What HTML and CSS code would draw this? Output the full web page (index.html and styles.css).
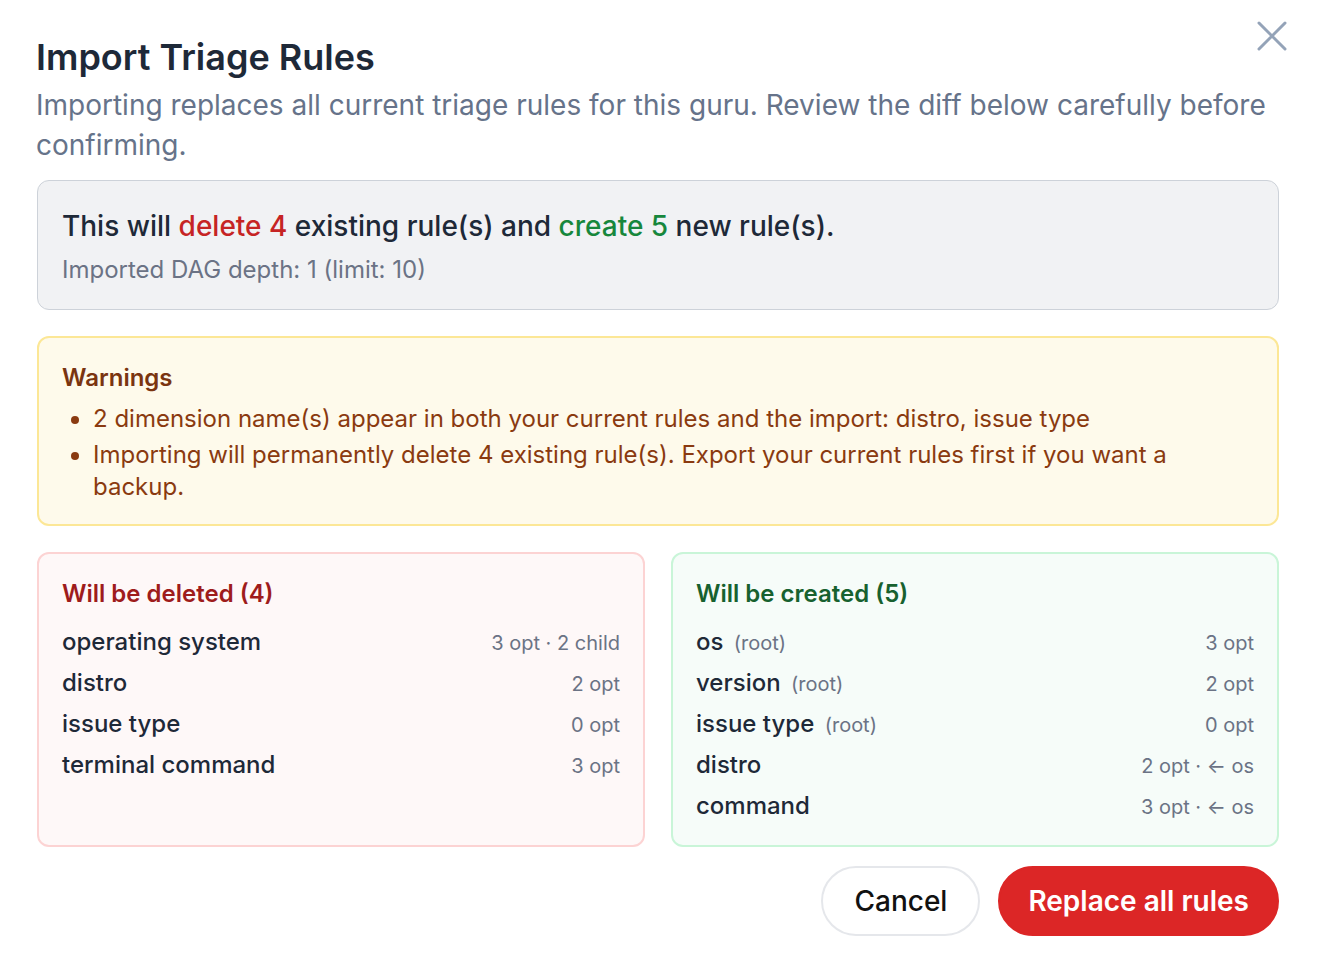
FILE: index.html
```html
<!DOCTYPE html>
<html lang="en">
<head>
<meta charset="utf-8">
<title>Import Triage Rules</title>
<link rel="stylesheet" href="styles.css">
</head>
<body>
<div class="dialog">
  <button class="close" aria-label="Close">
    <svg width="32" height="32" viewBox="0 0 32 32"><path d="M3 3 L29 29 M29 3 L3 29" stroke="#94a3b8" stroke-width="3" stroke-linecap="round" fill="none"/></svg>
  </button>
  <h1 class="title">Import Triage Rules</h1>
  <p class="subtitle">Importing replaces all current triage rules for this guru. Review the diff below carefully before confirming.</p>

  <div class="summary">
    <p class="summary-main">This will <span class="red">delete 4</span> existing rule(s) and <span class="green">create 5</span> new rule(s).</p>
    <p class="summary-sub">Imported DAG depth: 1 (limit: 10)</p>
  </div>

  <div class="warnings">
    <p class="warn-title">Warnings</p>
    <ul class="warn-list">
      <li>2 dimension name(s) appear in both your current rules and the import: distro, issue type</li>
      <li>Importing will permanently delete 4 existing rule(s). Export your current rules first if you want a backup.</li>
    </ul>
  </div>

  <div class="diff">
    <div class="panel panel-del">
      <p class="panel-title">Will be deleted (4)</p>
      <ul class="rows">
        <li class="row"><span class="name">operating system</span><span class="meta">3 opt · 2 child</span></li>
        <li class="row"><span class="name">distro</span><span class="meta">2 opt</span></li>
        <li class="row"><span class="name">issue type</span><span class="meta">0 opt</span></li>
        <li class="row"><span class="name">terminal command</span><span class="meta">3 opt</span></li>
      </ul>
    </div>
    <div class="panel panel-add">
      <p class="panel-title">Will be created (5)</p>
      <ul class="rows">
        <li class="row"><span class="name">os <span class="tag">(root)</span></span><span class="meta">3 opt</span></li>
        <li class="row"><span class="name">version <span class="tag">(root)</span></span><span class="meta">2 opt</span></li>
        <li class="row"><span class="name">issue type <span class="tag">(root)</span></span><span class="meta">0 opt</span></li>
        <li class="row"><span class="name">distro</span><span class="meta">2 opt · ← os</span></li>
        <li class="row"><span class="name">command</span><span class="meta">3 opt · ← os</span></li>
      </ul>
    </div>
  </div>

  <div class="actions">
    <button class="btn btn-cancel">Cancel</button>
    <button class="btn btn-danger">Replace all rules</button>
  </div>
</div>
</body>
</html>
```

FILE: styles.css
```css
* { box-sizing: border-box; }
html, body { margin: 0; padding: 0; background: #ffffff; }
body {
  font-family: Inter, "Noto Sans", "Liberation Sans", sans-serif;
  color: #1f2937;
}
p, h1, ul { margin: 0; padding: 0; }
ul { list-style: none; }

.dialog {
  position: relative;
  padding: 29px 39px 0 37px;
}

.close {
  position: absolute;
  top: 20px;
  right: 30px;
  width: 32px;
  height: 32px;
  padding: 0;
  border: none;
  background: none;
  display: flex;
  align-items: center;
  justify-content: center;
}

.title {
  font-size: 36px;
  line-height: 56px;
  font-weight: 600;
  color: #1e2938;
  margin-left: -1px;
}

.subtitle {
  font-size: 28px;
  line-height: 40px;
  color: #66738a;
  margin-left: -1px;
}

.summary {
  margin-top: 15px;
  background: #f1f2f4;
  border: 1px solid #cdd2d9;
  border-radius: 12px;
  padding: 25px 24px 23px 24px;
}
.summary-main {
  font-size: 28px;
  line-height: 40px;
  font-weight: 500;
  color: #1e2938;
}
.red { color: #c62424; }
.green { color: #17873c; }
.summary-sub {
  margin-top: 8px;
  font-size: 24px;
  line-height: 32px;
  color: #6b7385;
}

.warnings {
  margin-top: 26px;
  background: #fefaeb;
  border: 2px solid #fce796;
  border-radius: 12px;
  padding: 24px 22px 21px 23px;
  color: #8a3a10;
}
.warn-title {
  font-size: 24px;
  line-height: 32px;
  font-weight: 600;
  color: #7a3410;
}
.warn-list {
  margin-top: 9px;
  padding-left: 31px;
  list-style: disc;
  display: flex;
  flex-direction: column;
  gap: 4px;
}
.warn-list li {
  font-size: 24px;
  line-height: 32px;
}

.diff {
  margin-top: 26px;
  display: grid;
  grid-template-columns: 1fr 1fr;
  gap: 26px;
}
.panel {
  border-radius: 12px;
  padding: 24px 23px 23px 23px;
  border: 2px solid;
}
.panel-del { background: #fef8f8; border-color: #fcd3d3; }
.panel-add { background: #f6fcf9; border-color: #c9f5d8; }
.panel-title {
  font-size: 24px;
  line-height: 32px;
  font-weight: 600;
}
.panel-del .panel-title { color: #9e1c1c; }
.panel-add .panel-title { color: #17612f; }

.rows {
  margin-top: 16px;
  display: flex;
  flex-direction: column;
  gap: 9px;
}
.row {
  display: flex;
  justify-content: space-between;
  align-items: center;
  height: 32px;
}
.name {
  font-size: 24px;
  line-height: 32px;
  font-weight: 500;
  color: #1e2938;
}
.tag {
  font-size: 20px;
  font-weight: 400;
  color: #6b7385;
  margin-left: 4px;
}
.meta {
  font-size: 20px;
  line-height: 32px;
  color: #6b7385;
  padding-top: 2px;
}

.actions {
  margin-top: 19px;
  display: flex;
  justify-content: flex-end;
  gap: 18px;
}
.btn {
  font-family: inherit;
  font-size: 28px;
  line-height: 40px;
  font-weight: 500;
  height: 70px;
  border-radius: 35px;
  padding: 0 31px;
  cursor: pointer;
}
.btn-cancel {
  background: #ffffff;
  border: 2px solid #e5e7eb;
  color: #111111;
}
.btn-danger {
  background: #dc2626;
  border: 2px solid #dc2626;
  color: #ffffff;
  font-weight: 600;
  padding: 0 28px;
}
```
